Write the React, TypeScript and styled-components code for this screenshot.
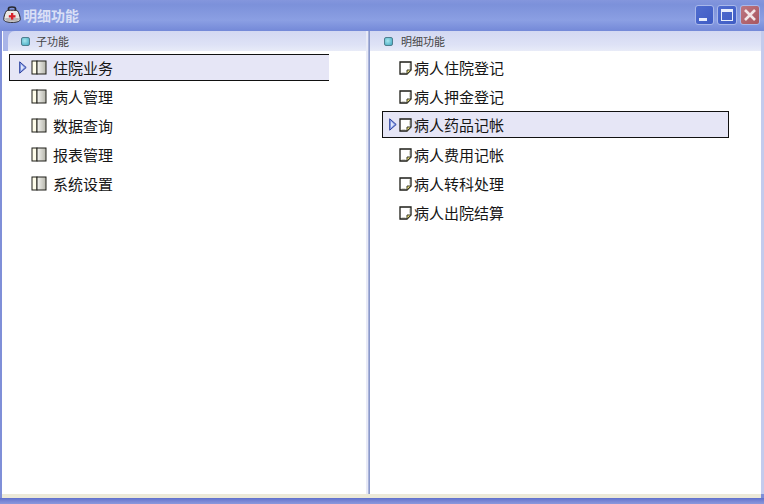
import styled, { createGlobalStyle } from 'styled-components';

const GROUPS = ['住院业务', '病人管理', '数据查询', '报表管理', '系统设置'];
const DETAILS = ['病人住院登记', '病人押金登记', '病人药品记帐', '病人费用记帐', '病人转科处理', '病人出院结算'];

const GlobalStyle = createGlobalStyle`
  html, body {
    margin: 0;
    padding: 0;
    background: #ffffff;
  }
  * {
    box-sizing: border-box;
  }
`;

const BagIcon = () => (
  <svg width="18" height="17" viewBox="0 0 18 17">
    <path d="M5.5 5V2.6C5.5 1.4 7 1 9 1s3.5.4 3.5 1.6V5" fill="none" stroke="#26262c" strokeWidth="1.7" />
    <path d="M3.6 4.8C5 4 13 4 14.4 4.8 16 6.5 17.4 11 17.2 13.6 17 15.6 13 16.4 9 16.4S1 15.6.8 13.6C.6 11 2 6.5 3.6 4.8Z" fill="#ebe8e4" stroke="#24242a" />
    <path d="M2 13.5C2.2 14.8 5 15.4 9 15.4s6.8-.6 7-1.9L15.5 12H2.5Z" fill="#b9b6b8" />
    <rect x="8" y="7" width="2.3" height="6.6" fill="#d8222a" />
    <rect x="5.8" y="9.2" width="6.7" height="2.3" fill="#d8222a" />
  </svg>
);

const Marker = () => (
  <svg width="8" height="13" viewBox="0 0 8 13">
    <path d="M.7.8 7.2 6.5.7 12.2Z" fill="#8fa4ea" stroke="#2b3f9c" strokeWidth="1" />
    <path d="M2 3.5 5 6.5 2 9.5Z" fill="#dfe6fb" />
  </svg>
);

const BookIcon = () => (
  <svg width="16" height="15" viewBox="0 0 16 15">
    <defs>
      <linearGradient id="bookPane" x1="0" x2="1" y1="0" y2="0">
        <stop offset="0" stopColor="#f6f6f2" />
        <stop offset="1" stopColor="#b4b4aa" />
      </linearGradient>
    </defs>
    <rect x="1" y="1" width="5" height="13" fill="#fffdea" stroke="#1e1e18" />
    <rect x="6" y="1" width="9" height="13" fill="url(#bookPane)" stroke="#1e1e18" />
  </svg>
);

const PageIcon = () => (
  <svg width="13" height="14" viewBox="0 0 13 14">
    <path d="M1 1H12V9L8 13H1Z" fill="#ffffff" stroke="#1e1e18" strokeWidth="1.3" />
    <path d="M8 13V9H12Z" fill="#efe27a" stroke="#3a3a28" />
    <path d="M10.5 2.5V7.5M2.5 11.5H6.5" stroke="#d2d2c8" />
  </svg>
);

export default function App() {
  return (
    <Window>
      <GlobalStyle />
      <TitleBar>
        <TitleIconSlot>
          <BagIcon />
        </TitleIconSlot>
        <TitleText>明细功能</TitleText>
        <WindowButtons>
          <WinButton $width={19}>
            <MinGlyph />
          </WinButton>
          <WinButton $width={20}>
            <MaxGlyph />
          </WinButton>
          <WinButton $width={20} $close>
            <svg width="14" height="14" viewBox="0 0 14 14">
              <path d="M2 2 12 12M12 2 2 12" stroke="#f3e6e6" strokeWidth="2.6" />
            </svg>
          </WinButton>
        </WindowButtons>
      </TitleBar>
      <Body>
        <LeftPanel>
          <HeaderGutter>
            <PanelHeader $indent={13} $rounded>
              <BulletDot />
              <HeaderText $gap={6}>子功能</HeaderText>
            </PanelHeader>
          </HeaderGutter>
          <List $indent={6}>
            {GROUPS.map((name, i) => (
              <Row key={name}>
                <RowBox $selected={i === 0} $nudge={i === 0 ? 1 : 0} $width={320} $closed={false} $left={9}>
                  <MarkerSlot $width={12}>{i === 0 && <Marker />}</MarkerSlot>
                  <BookIcon />
                  <RowText $gap={6}>{name}</RowText>
                </RowBox>
              </Row>
            ))}
          </List>
        </LeftPanel>
        <Divider />
        <RightPanel>
          <PanelHeader $indent={14}>
            <BulletDot />
            <HeaderText $gap={8}>明细功能</HeaderText>
          </PanelHeader>
          <List $indent={12}>
            {DETAILS.map((name, i) => (
              <Row key={name}>
                <RowBox $selected={i === 2} $nudge={0} $width={347} $closed $left={6}>
                  <MarkerSlot $width={10}>{i === 2 && <Marker />}</MarkerSlot>
                  <PageIcon />
                  <RowText $gap={2}>{name}</RowText>
                </RowBox>
              </Row>
            ))}
          </List>
        </RightPanel>
      </Body>
      <StatusStrip />
      <BottomEdge />
    </Window>
  );
}

const Window = styled.div`
  width: 764px;
  height: 504px;
  display: flex;
  flex-direction: column;
  overflow: hidden;
  font-family: 'Noto Sans CJK SC', 'Liberation Sans', sans-serif;
  background: #7f8fd8;
`;

const TitleBar = styled.div`
  height: 31px;
  flex: none;
  display: flex;
  align-items: center;
  padding: 0 4px 2px 3px;
  background: linear-gradient(180deg, #8496dd 0%, #7c91da 15%, #8b9fe3 65%, #7489d8 100%);
`;

const TitleIconSlot = styled.span`
  display: flex;
  width: 19px;
`;

const TitleText = styled.span`
  margin-left: 1px;
  font-size: 14px;
  line-height: 18px;
  font-weight: 700;
  color: #d9dff6;
`;

const WindowButtons = styled.div`
  margin-left: auto;
  display: flex;
  gap: 3px;
`;

const WinButton = styled.div<{ $close?: boolean; $width: number }>`
  width: ${({ $width }) => $width}px;
  height: 20px;
  display: flex;
  align-items: center;
  justify-content: center;
  border: 1px solid #a9b8ea;
  border-radius: 3px;
  background: ${({ $close }) =>
    $close
      ? 'linear-gradient(135deg, #bd7680, #a8565f)'
      : 'linear-gradient(135deg, #4f6ccf, #3f5cc4)'};
`;

const MinGlyph = styled.span`
  width: 8px;
  height: 3px;
  margin: 9px 4px 0 0;
  background: #e8eefc;
`;

const MaxGlyph = styled.span`
  width: 12px;
  height: 12px;
  border: 1px solid #e8eefc;
  border-top-width: 3px;
`;

const Body = styled.div`
  flex: 1;
  min-height: 0;
  display: flex;
  margin: 0 0 0 2px;
  padding: 0 3px 0 1px;
  background: linear-gradient(90deg, #ffffff, #ffffff) no-repeat left / calc(100% - 3px) 100%, #c3cbed;
`;

const LeftPanel = styled.div`
  width: 363px;
  flex: none;
  display: flex;
  flex-direction: column;
`;

const RightPanel = styled.div`
  flex: 1;
  display: flex;
  flex-direction: column;
`;

const Divider = styled.div`
  width: 4px;
  flex: none;
  background: linear-gradient(90deg, #e8eaf7 0 2px, #aab4da 2px 3px, #8c9acb 3px);
`;

const HeaderGutter = styled.div`
  height: 20px;
  flex: none;
  padding-left: 5px;
  background: #a9b5e8;
`;

const PanelHeader = styled.div<{ $indent: number; $rounded?: boolean }>`
  height: 20px;
  flex: none;
  display: flex;
  align-items: center;
  padding-left: ${({ $indent }) => $indent}px;
  border-top-left-radius: ${({ $rounded }) => ($rounded ? 7 : 0)}px;
  background: linear-gradient(180deg, #d3d8f2 0%, #dee2f6 70%, #e8ebf8 100%);
`;

const BulletDot = styled.span`
  width: 9px;
  height: 9px;
  border-radius: 2px;
  border: 1px solid #4f7f8f;
  background: radial-gradient(circle at 40% 40%, #a8e6ee, #3fa8c0);
`;

const HeaderText = styled.span<{ $gap: number }>`
  margin-left: ${({ $gap }) => $gap}px;
  font-size: 11px;
  color: #454545;
`;

const List = styled.div<{ $indent: number }>`
  display: flex;
  flex-direction: column;
  padding: 2px 0 0 ${({ $indent }) => $indent}px;
`;

const Row = styled.div`
  height: 29px;
`;

const RowBox = styled.div<{
  $width: number;
  $selected: boolean;
  $nudge: number;
  $closed: boolean;
  $left: number;
}>`
  width: ${({ $width }) => $width}px;
  height: 27px;
  margin-top: ${({ $nudge }) => $nudge}px;
  display: flex;
  align-items: center;
  padding-top: ${({ $selected }) => ($selected ? 0 : 2)}px;
  padding-left: ${({ $left }) => $left}px;
  border-style: solid;
  border-width: 1px ${({ $closed }) => ($closed ? 1 : 0)}px 1px 1px;
  border-color: ${({ $selected }) => ($selected ? '#111111' : 'transparent')};
  background: ${({ $selected }) => ($selected ? '#e6e6f6' : 'transparent')};
`;

const MarkerSlot = styled.span<{ $width: number }>`
  width: ${({ $width }) => $width}px;
  flex: none;
  display: flex;
  align-items: center;
`;

const RowText = styled.span<{ $gap: number }>`
  margin-left: ${({ $gap }) => $gap}px;
  font-size: 15px;
  line-height: 20px;
  color: #161616;
`;

const StatusStrip = styled.div`
  height: 4px;
  flex: none;
  margin: 0 3px 0 2px;
  background: #ece9d8;
`;

const BottomEdge = styled.div`
  height: 6px;
  flex: none;
  background: linear-gradient(180deg, #5f70cc, #7c8ad6 60%, #8a98dc);
`;
